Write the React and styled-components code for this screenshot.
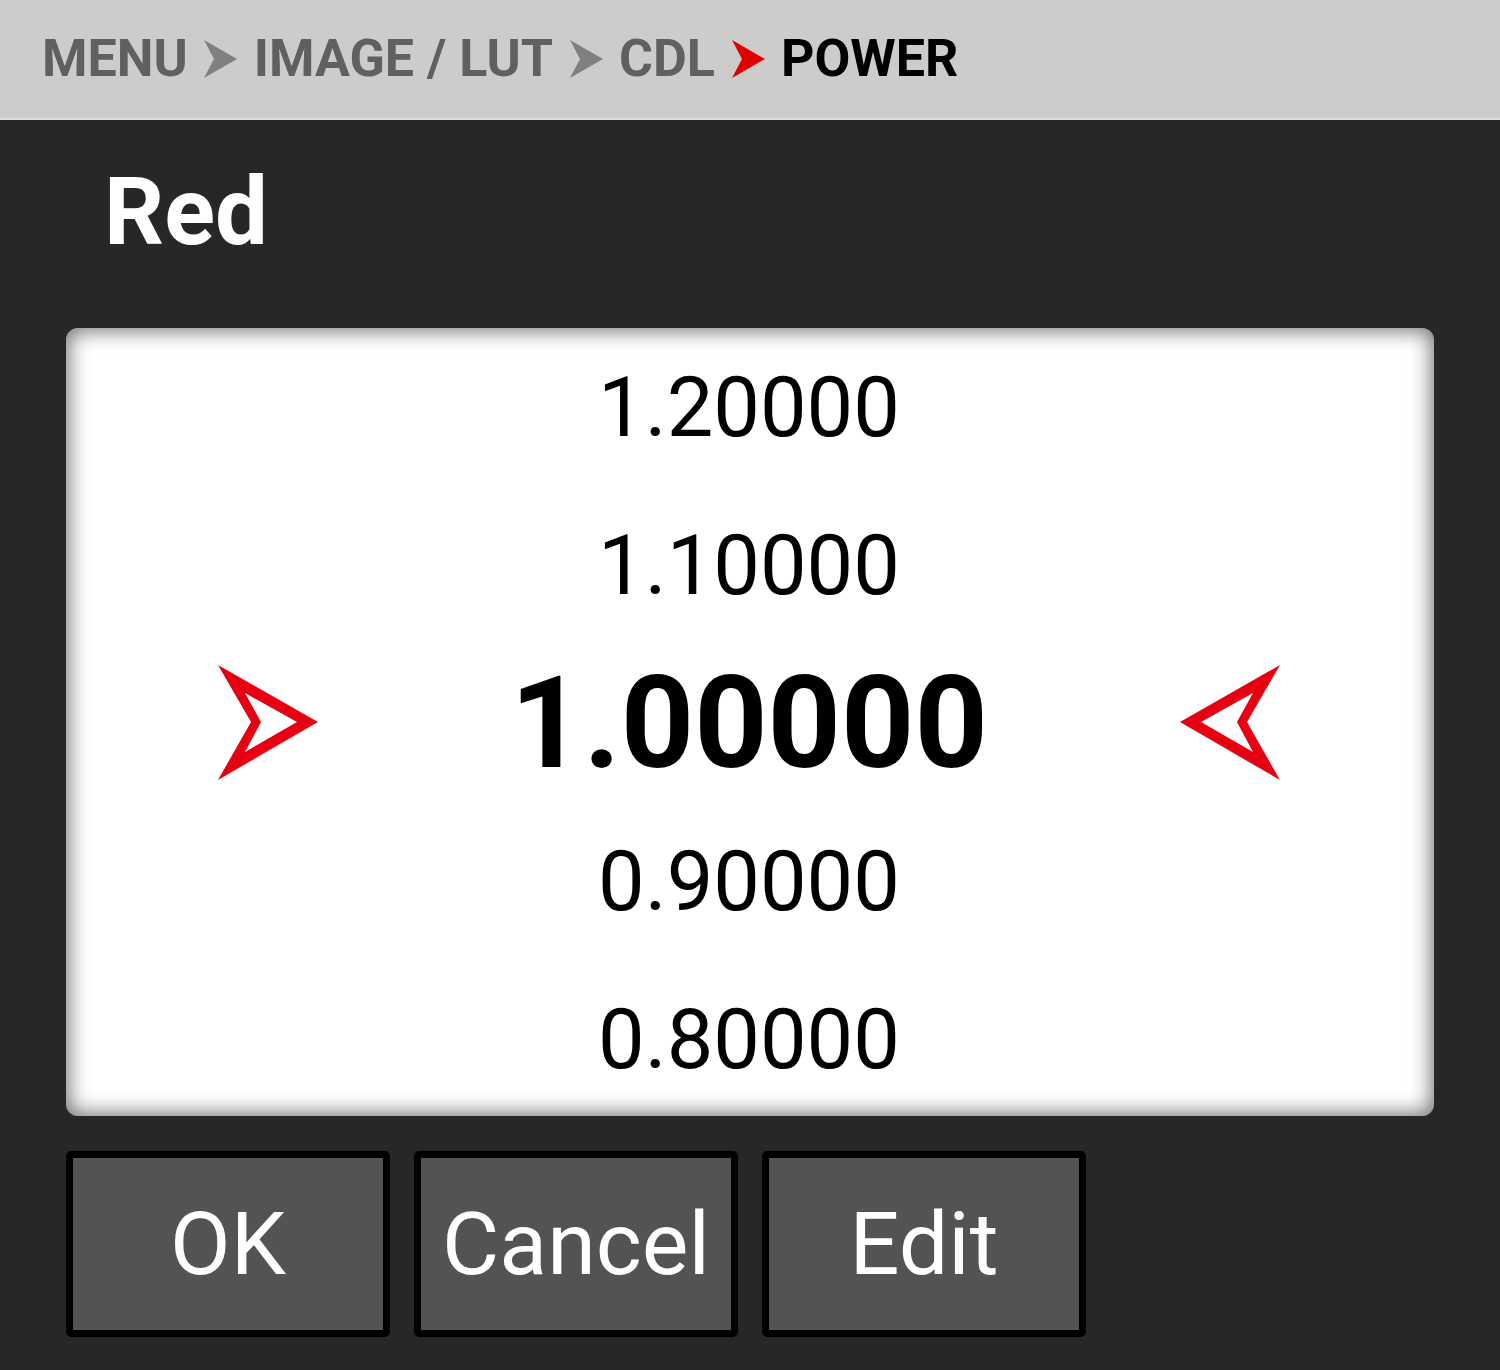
import React from "react"
import styled, { createGlobalStyle } from "styled-components"

const GlobalStyle = createGlobalStyle`
  html, body {
    margin: 0;
    padding: 0;
    background: #272727;
    font-family: Roboto, "Noto Sans", sans-serif;
  }
`

const Screen = styled.div`
  width: 1500px;
  height: 1370px;
  background: #272727;
  display: flex;
  flex-direction: column;
  overflow: hidden;
`

const Header = styled.div`
  height: 118px;
  background: #cccccc;
  border-bottom: 2px solid #dedede;
  display: flex;
  align-items: center;
  padding-left: 42px;
  gap: 16.5px;
  box-sizing: content-box;
`

const Crumb = styled.span`
  font-size: 52px;
  font-weight: 700;
  line-height: 1;
  color: ${p => (p.$current ? "#000" : "#606060")};
`

const Chevron = ({ color }) => (
  <svg width="33" height="38" viewBox="0 0 33 38">
    <polygon points="0,0 33,19 0,38 10,19" fill={color} />
  </svg>
)

const Body = styled.div`
  padding: 45px 66px 0;
  display: flex;
  flex-direction: column;
`

const Title = styled.h1`
  margin: 0 0 70px 38px;
  font-size: 94px;
  line-height: 1;
  font-weight: 700;
  color: #fff;
`

const Picker = styled.div`
  height: 788px;
  background: #fff;
  border-radius: 12px;
  box-shadow: inset 0 0 20px 3px rgba(0, 0, 0, 0.55);
  display: grid;
  grid-template-rows: repeat(5, 158px);
  align-content: start;
  margin-top: -1px;
`

const Row = styled.div`
  display: flex;
  align-items: center;
  justify-content: ${p => (p.$selected ? "space-between" : "center")};
  padding: 0 154px 0 152px;
`

const Value = styled.span`
  font-size: ${p => (p.$selected ? "128px" : "83px")};
  font-weight: ${p => (p.$selected ? 700 : 400)};
  line-height: 1;
  color: #000;
`

const Marker = ({ flip }) => (
  <svg
    width="100"
    height="116"
    viewBox="0 0 100 116"
    style={flip ? { transform: "scaleX(-1)" } : undefined}
  >
    <path
      fillRule="evenodd"
      fill="#e60012"
      d="M0 0 L100 57 L0 115 L33 57 Z M27 28 L43 57 L27 87 L79 57 Z"
    />
  </svg>
)

const Buttons = styled.div`
  display: flex;
  gap: 24px;
  margin-top: 35px;
`

const Button = styled.button`
  width: 324px;
  height: 186px;
  box-sizing: border-box;
  border: 7px solid #000;
  border-radius: 5px;
  background: #535353;
  color: #fff;
  font-family: Roboto, sans-serif;
  font-size: 88px;
  font-weight: 400;
  line-height: 1;
  padding: 0;
`

const values = ["1.20000", "1.10000", "1.00000", "0.90000", "0.80000"]

export default function App() {
  return (
    <Screen>
      <GlobalStyle />
      <Header>
        <Crumb>MENU</Crumb>
        <Chevron color="#808080" />
        <Crumb>IMAGE / LUT</Crumb>
        <Chevron color="#808080" />
        <Crumb>CDL</Crumb>
        <Chevron color="#e00000" />
        <Crumb $current>POWER</Crumb>
      </Header>
      <Body>
        <Title>Red</Title>
        <Picker>
          {values.map((v, i) =>
            i === 2 ? (
              <Row key={v} $selected>
                <Marker />
                <Value $selected>{v}</Value>
                <Marker flip />
              </Row>
            ) : (
              <Row key={v}>
                <Value>{v}</Value>
              </Row>
            )
          )}
        </Picker>
        <Buttons>
          <Button>OK</Button>
          <Button>Cancel</Button>
          <Button>Edit</Button>
        </Buttons>
      </Body>
    </Screen>
  )
}
